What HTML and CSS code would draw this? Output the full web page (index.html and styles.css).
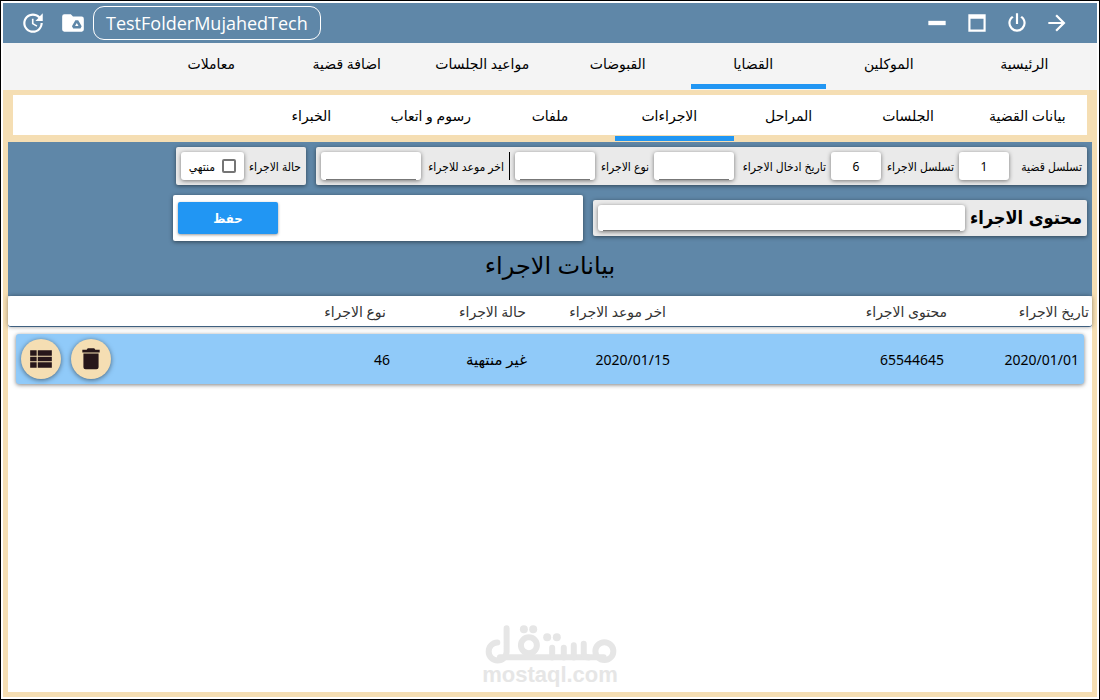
FILE: index.html
```html
<!DOCTYPE html>
<html lang="ar" dir="rtl">
<head>
<meta charset="utf-8">
<title>بيانات الاجراء</title>
<link rel="stylesheet" href="styles.css">
</head>
<body>
<div class="window">
  <header class="titlebar">
    <div class="titlebar-group">
      <button class="icon-button" aria-label="تحديث"><svg class="icon" viewBox="0 0 24 24"><path d="M21,10.12H14.22L16.96,7.3C14.23,4.6 9.81,4.5 7.08,7.2C4.35,9.91 4.35,14.28 7.08,17C9.81,19.7 14.23,19.7 16.96,17C18.32,15.65 19,14.08 19,12.1H21C21,14.08 20.12,16.65 18.36,18.39C14.85,21.87 9.15,21.87 5.64,18.39C2.14,14.92 2.11,9.28 5.62,5.81C9.13,2.34 14.76,2.34 18.27,5.81L21,3V10.12M12.5,8V12.25L16,14.33L15.28,15.54L11,13V8H12.5Z"/></svg></button>
      <button class="icon-button" aria-label="المجلد"><svg class="icon" viewBox="0 0 24 24"><path d="M20,6H12L10,4H4A2,2 0 0,0 2,6V18A2,2 0 0,0 4,20H20A2,2 0 0,0 22,18V8A2,2 0 0,0 20,6Z"/><path class="drive" d="M14.2,9.4H16.8L20,15L18.9,17H12.2L11,15Z"/><path d="M15.5,12L17.1,14.7H13.9Z"/></svg></button>
      <span class="folder-name">TestFolderMujahedTech</span>
    </div>
    <div class="titlebar-group">
      <button class="icon-button" aria-label="تصغير"><svg class="icon" viewBox="0 0 24 24"><path d="M20,14H4V10H20"/></svg></button>
      <button class="icon-button" aria-label="تكبير"><svg class="icon" viewBox="0 0 24 24"><path d="M4,4H20V20H4V4M6,8V18H18V8H6Z"/></svg></button>
      <button class="icon-button" aria-label="اغلاق"><svg class="icon" viewBox="0 0 24 24"><path d="M16.56,5.44L15.11,6.89C16.84,7.94 18,9.83 18,12A6,6 0 0,1 12,18A6,6 0 0,1 6,12C6,9.83 7.16,7.94 8.88,6.88L7.44,5.44C5.36,6.88 4,9.28 4,12A8,8 0 0,0 12,20A8,8 0 0,0 20,12C20,9.28 18.64,6.88 16.56,5.44M13,3H11V13H13"/></svg></button>
      <button class="icon-button" aria-label="رجوع"><svg class="icon" viewBox="0 0 24 24"><path d="M4,11V13H16L10.5,18.5L11.92,19.92L19.84,12L11.92,4.08L10.5,5.5L16,11H4Z"/></svg></button>
    </div>
  </header>

  <nav class="main-nav">
    <a class="tab" href="#">الرئيسية</a>
    <a class="tab" href="#">الموكلين</a>
    <a class="tab active" href="#">القضايا</a>
    <a class="tab" href="#">القبوضات</a>
    <a class="tab" href="#">مواعيد الجلسات</a>
    <a class="tab" href="#">اضافة قضية</a>
    <a class="tab" href="#">معاملات</a>
  </nav>

  <main class="frame">
    <nav class="sub-nav">
      <a class="tab" href="#">بيانات القضية</a>
      <a class="tab" href="#">الجلسات</a>
      <a class="tab" href="#">المراحل</a>
      <a class="tab active" href="#">الاجراءات</a>
      <a class="tab" href="#">ملفات</a>
      <a class="tab" href="#">رسوم و اتعاب</a>
      <a class="tab" href="#">الخبراء</a>
    </nav>

    <form class="panel">
      <div class="form-row">
        <div class="card fields">
          <label for="case-no">تسلسل قضية</label>
          <input class="box" id="case-no" value="1">
          <label for="step-no">تسلسل الاجراء</label>
          <input class="box" id="step-no" value="6">
          <label for="entry-date">تاريخ ادخال الاجراء</label>
          <input class="box lined" id="entry-date">
          <label for="step-type">نوع الاجراء</label>
          <input class="box lined" id="step-type">
          <span class="divider"></span>
          <label for="last-date">اخر موعد للاجراء</label>
          <input class="box lined" id="last-date">
        </div>
        <div class="card state">
          <span>حالة الاجراء</span>
          <label class="box check"><input type="checkbox">منتهي</label>
        </div>
      </div>
      <div class="form-row">
        <div class="card content">
          <label for="content">محتوى الاجراء</label>
          <input class="box lined" id="content">
        </div>
        <div class="card actions">
          <button class="save" type="button">حفظ</button>
        </div>
      </div>
      <h1 class="heading">بيانات الاجراء</h1>
    </form>

    <section class="results">
      <table class="steps">
        <thead>
          <tr><th>تاريخ الاجراء</th><th>محتوى الاجراء</th><th>اخر موعد الاجراء</th><th>حالة الاجراء</th><th>نوع الاجراء</th></tr>
        </thead>
        <tbody>
          <tr>
            <td>2020/01/01</td><td>65544645</td><td>2020/01/15</td><td class="status">غير منتهية</td><td>46</td>
            <td class="row-actions">
              <button class="round" type="button" aria-label="حذف"><svg class="icon" viewBox="0 0 24 24"><path d="M20,3.5H16L15,2H9L8,3.5H4V6H20M5,19.5A2,2 0 0,0 7,21.5H17A2,2 0 0,0 19,19.5V7H5V19.5Z"/></svg></button>
              <button class="round" type="button" aria-label="تفاصيل"><svg class="icon" viewBox="0 0 24 24"><path d="M9,4V9H22V4M9,20H22V15H9M9,14H22V10H9M2,9H8V4H2M2,20H8V15H2M2,14H8V10H2V14Z"/></svg></button>
            </td>
          </tr>
        </tbody>
      </table>
      <div class="watermark">
        <svg class="brand" viewBox="70 42 400 122" role="img" aria-label="مستقل">
          <g class="strokes">
            <path d="M110,97A27,27 0 1,0 138,125V54"/>
            <path d="M118,141H430"/>
            <circle cx="205" cy="105" r="24"/>
            <circle cx="432" cy="123" r="27"/>
            <path d="M275,113V142M310,113V142M340,105V142M370,101V130Q370,142 385,142"/>
          </g>
          <circle cx="190" cy="57" r="12"/><circle cx="218" cy="57" r="12"/>
          <circle cx="260" cy="81" r="12"/><circle cx="289" cy="81" r="12"/>
        </svg>
        <span class="brand-name">mostaql.com</span>
      </div>
    </section>
  </main>
</div>
</body>
</html>
```
FILE: styles.css
```css
* { box-sizing: border-box; }

body {
  margin: 0;
  font-family: "Noto Sans", "DejaVu Sans", sans-serif;
  font-size: 14px;
  color: #000;
}

button, input { font: inherit; color: inherit; margin: 0; padding: 0; border: 0; }

.window {
  display: flex;
  flex-direction: column;
  min-height: 100vh;
  padding: 2px;
  border: 1px solid #000;
  background: #fff;
}

.titlebar {
  display: flex;
  justify-content: space-between;
  align-items: center;
  direction: ltr;
  height: 40px;
  padding: 0 20px 0 10px;
  background: #5f87a8;
  color: #fff;
}

.titlebar-group { display: flex; align-items: center; }

.icon-button {
  display: flex;
  align-items: center;
  justify-content: center;
  width: 40px;
  height: 40px;
  background: none;
}

.icon { width: 26px; height: 26px; fill: currentColor; }
.drive { fill: #5f87a8; }

.folder-name {
  padding: 0 12px;
  border: 1px solid #fff;
  border-radius: 11px;
  font-family: "Open Sans", sans-serif;
  font-size: 18px;
  line-height: 32px;
}

.main-nav {
  display: grid;
  grid-template-columns: repeat(8, 1fr);
  height: 47px;
  padding-left: 10px;
  padding-bottom: 1px;
  background: #f4f4f4;
}

.tab {
  display: flex;
  align-items: center;
  justify-content: center;
  padding-right: 10px;
  border-bottom: 5px solid transparent;
  color: #000;
  text-decoration: none;
  white-space: nowrap;
}

.tab.active { border-bottom-color: #2196f3; }

.frame {
  display: flex;
  flex: 1;
  flex-direction: column;
  padding: 5px;
  background: #f5deb3;
}

.sub-nav {
  display: grid;
  grid-template-columns: repeat(9, 1fr);
  height: 47px;
  padding-left: 10px;
  padding-bottom: 1px;
  background: linear-gradient(#fff, #fff) 5px 0 / calc(100% - 10px) 40px no-repeat;
}

.panel {
  display: flex;
  flex-direction: column;
  gap: 10px;
  padding: 5px 5px 17px;
  background: #5f87a8;
}

.form-row { display: flex; align-items: center; gap: 10px; }

.card {
  display: flex;
  align-items: center;
  gap: 5px;
  padding: 5px;
  border-radius: 2px;
  background: #eaeaea;
  box-shadow: 0 1px 4px rgba(0, 0, 0, 0.5);
  white-space: nowrap;
}

.fields, .state {
  font-family: "Noto Sans", "DejaVu Sans Condensed", sans-serif;
  font-size: 12px;
}

.fields {
  display: grid;
  grid-template-columns: 68px 50px 68px 50px 87px 80px 49px 80px 1px 78px 100px;
}

.box {
  width: 100%;
  height: 28px;
  border-radius: 3px;
  background: #fff;
  box-shadow: 0 1px 4px rgba(0, 0, 0, 0.5);
  text-align: center;
}

.lined {
  background: linear-gradient(#777, #777) center bottom / calc(100% - 10px) 1px no-repeat #fff;
}

.divider { height: 28px; background: #000; }

.state .box { width: 63px; }

.check {
  display: flex;
  align-items: center;
  justify-content: center;
  gap: 7px;
}

.check input {
  appearance: none;
  width: 14px;
  height: 14px;
  border: 2px solid #757575;
  border-radius: 2px;
}

.content { width: 494px; }
.content label {
  font-family: "DejaVu Sans Condensed", sans-serif;
  font-size: 18px;
  font-weight: bold;
  line-height: 26px;
}
.content .box { flex: 1; height: 26px; }

.actions {
  justify-content: flex-end;
  width: 410px;
  height: 46px;
  background: #fff;
}

.save {
  width: 100px;
  height: 32px;
  border-radius: 2px;
  background: #2196f3;
  box-shadow: 0 1px 3px rgba(0, 0, 0, 0.4);
  color: #fff;
  font-family: "DejaVu Sans Condensed", sans-serif;
  font-size: 13px;
  font-weight: bold;
}

.heading {
  margin: 0;
  font-size: 24px;
  font-weight: normal;
  line-height: 28px;
  text-align: center;
}

.results {
  display: flex;
  flex: 1;
  flex-direction: column;
  justify-content: space-between;
  background: #fff;
}

.steps, .steps thead, .steps tbody { display: block; }

.steps tr {
  display: grid;
  grid-template-columns: 142px 281px 140px 140px 1fr;
  align-items: center;
}

.steps th, .steps td { padding: 0; text-align: start; white-space: nowrap; }
.steps th { font-weight: normal; color: #333; }

.steps thead tr {
  height: 31px;
  padding: 0 3px;
  border-bottom: 1px solid #3f6080;
  border-radius: 3px;
  box-shadow: 0 0 4px rgba(0, 0, 0, 0.4);
}

.steps tbody tr {
  grid-template-columns: 135px 274px 143px 137px 1fr auto;
  height: 50px;
  margin: 7px 8px 0;
  padding: 0 5px;
  border-radius: 3px;
  background: #90caf9;
  box-shadow: 0 1px 4px rgba(0, 0, 0, 0.5);
}

.steps .status { font-size: 15px; }

.steps .row-actions { display: flex; gap: 10px; }

.round {
  display: flex;
  align-items: center;
  justify-content: center;
  width: 40px;
  height: 40px;
  border-radius: 50%;
  background: #f5deb3;
  box-shadow: 0 1px 5px rgba(0, 0, 0, 0.5);
  color: #27161a;
}

.watermark {
  display: flex;
  flex-direction: column;
  align-items: center;
  padding-bottom: 7px;
  color: #e6e6e6;
}

.brand { width: 133px; height: 41px; fill: currentColor; }
.strokes { fill: none; stroke: currentColor; stroke-width: 18; stroke-linecap: round; }

.brand-name {
  direction: ltr;
  font-family: "Liberation Sans", sans-serif;
  font-size: 22px;
  font-weight: bold;
  line-height: 20px;
}
```
